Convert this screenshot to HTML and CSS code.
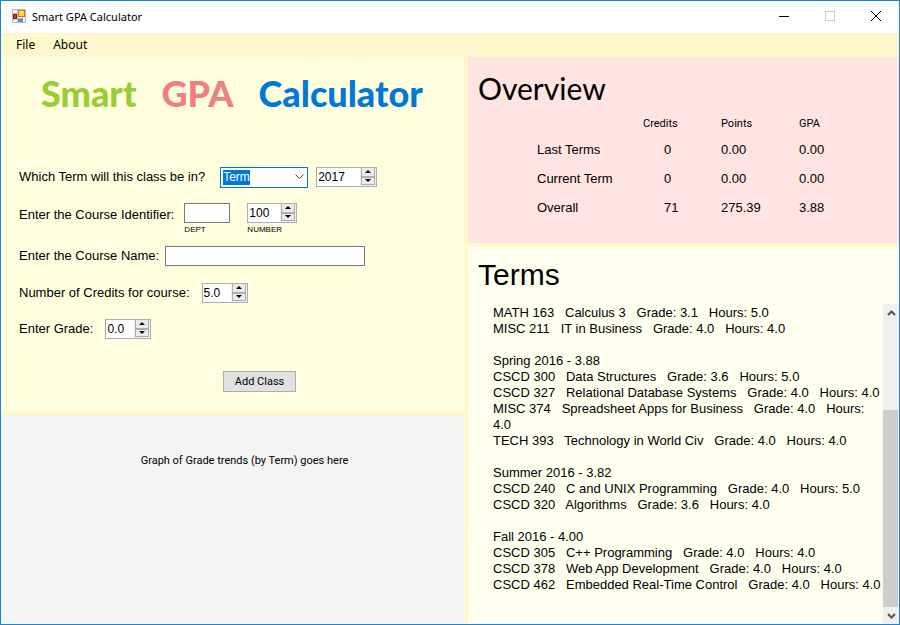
FILE: index.html
```
<!DOCTYPE html>
<html lang="en">
<head>
<meta charset="utf-8">
<title>Smart GPA Calculator</title>
<link rel="stylesheet" href="styles.css">
</head>
<body>
<div class="window">
  <header class="titlebar">
    <svg class="app-icon" width="14" height="14" viewBox="0 0 14 14" aria-hidden="true">
      <rect x="0.5" y="0.5" width="13" height="13" fill="#f4f4f4" stroke="#b9b9b9"/>
      <path d="M5.500 1V13M1 4.500H6M1 10.500H6M10.500 8V13" stroke="#c4c4c4" fill="none"/>
      <rect x="1.500" y="5.500" width="3" height="4" fill="#c93a35" stroke="#911915"/>
      <rect x="6.500" y="1.500" width="6" height="6" fill="#ffd34f" stroke="#b98010"/>
      <path d="M7 2.500H11" stroke="#fff0a8"/>
      <rect x="6" y="9" width="5" height="4" fill="#4f8ceb"/>
      <path d="M6 9.500H11" stroke="#8bb6f7"/>
    </svg>
    <span class="window-title">Smart GPA Calculator</span>
    <div class="window-buttons">
      <button type="button" aria-label="Minimize"><svg width="10" height="10" viewBox="0 0 10 10"><path d="M0 5.500H10" stroke="#000"/></svg></button>
      <button type="button" aria-label="Maximize" disabled><svg width="10" height="10" viewBox="0 0 10 10"><rect x="0.500" y="0.500" width="9" height="9" fill="none" stroke="#ccc"/></svg></button>
      <button type="button" aria-label="Close"><svg width="10" height="10" viewBox="0 0 10 10"><path d="M0 0L10 10M10 0L0 10" stroke="#000"/></svg></button>
    </div>
  </header>
  <nav class="menu">
    <button type="button">File</button>
    <button type="button">About</button>
  </nav>
  <main class="panes">
    <div class="column column-left">
      <form class="entry">
        <h1 class="brand"><span class="brand-smart">Smart</span> <span class="brand-gpa">GPA</span> <span class="brand-calc">Calculator</span></h1>
        <div class="row row-wide">
          <label for="term">Which Term will this class be in?</label>
          <div class="pair">
            <span class="combo">
              <select id="term"><option>Term</option></select>
              <svg width="9" height="6" viewBox="0 0 9 6" aria-hidden="true"><path d="M0.500 0.500L4.500 4.500L8.500 0.500" fill="none" stroke="#444"/></svg>
            </span>
            <span class="spinner spinner-year">
              <input type="number" value="2017" aria-label="Year">
              <span class="steps"><button type="button" class="up" aria-label="Increase year"></button><button type="button" class="down" aria-label="Decrease year"></button></span>
            </span>
          </div>
        </div>
        <div class="row row-captioned">
          <span>Enter the Course Identifier:</span>
          <div class="field field-dept"><input class="text" id="dept" type="text"><label for="dept">DEPT</label></div>
          <div class="field">
            <span class="spinner spinner-number">
              <input type="number" id="number" value="100">
              <span class="steps"><button type="button" class="up" aria-label="Increase number"></button><button type="button" class="down" aria-label="Decrease number"></button></span>
            </span>
            <label for="number">NUMBER</label>
          </div>
        </div>
        <div class="row row-tight">
          <label for="name">Enter the Course Name:</label>
          <input class="text text-name" id="name" type="text">
        </div>
        <div class="row">
          <label for="credits">Number of Credits for course:</label>
          <span class="spinner">
            <input type="text" inputmode="decimal" id="credits" value="5.0">
            <span class="steps"><button type="button" class="up" aria-label="Increase credits"></button><button type="button" class="down" aria-label="Decrease credits"></button></span>
          </span>
        </div>
        <div class="row">
          <label for="grade">Enter Grade:</label>
          <span class="spinner">
            <input type="text" inputmode="decimal" id="grade" value="0.0">
            <span class="steps"><button type="button" class="up" aria-label="Increase grade"></button><button type="button" class="down" aria-label="Decrease grade"></button></span>
          </span>
        </div>
        <button class="add" type="button">Add Class</button>
      </form>
      <section class="graph"><p>Graph of Grade trends (by Term) goes here</p></section>
    </div>
    <div class="column column-right">
      <section class="overview">
        <h2>Overview</h2>
        <table>
          <thead><tr><td></td><th scope="col">Credits</th><th scope="col">Points</th><th scope="col">GPA</th></tr></thead>
          <tbody>
            <tr><th scope="row">Last Terms</th><td class="credits">0</td><td>0.00</td><td>0.00</td></tr>
            <tr><th scope="row">Current Term</th><td class="credits">0</td><td>0.00</td><td>0.00</td></tr>
            <tr><th scope="row">Overall</th><td class="credits">71</td><td>275.39</td><td>3.88</td></tr>
          </tbody>
        </table>
      </section>
      <section class="terms">
        <h2>Terms</h2>
        <div class="log">
          <div class="log-text">MATH 163   Calculus 3   Grade: 3.1   Hours: 5.0
MISC 211   IT in Business   Grade: 4.0   Hours: 4.0

Spring 2016 - 3.88
CSCD 300   Data Structures   Grade: 3.6   Hours: 5.0
CSCD 327   Relational Database Systems   Grade: 4.0   Hours: 4.0
MISC 374   Spreadsheet Apps for Business   Grade: 4.0   Hours: 4.0
TECH 393   Technology in World Civ   Grade: 4.0   Hours: 4.0

Summer 2016 - 3.82
CSCD 240   C and UNIX Programming   Grade: 4.0   Hours: 5.0
CSCD 320   Algorithms   Grade: 3.6   Hours: 4.0

Fall 2016 - 4.00
CSCD 305   C++ Programming   Grade: 4.0   Hours: 4.0
CSCD 378   Web App Development   Grade: 4.0   Hours: 4.0
CSCD 462   Embedded Real-Time Control   Grade: 4.0   Hours: 4.0</div>
          <div class="scrollbar">
            <button type="button" aria-label="Scroll up"><svg width="9" height="6" viewBox="0 0 9 6"><path d="M1 5L4.500 1.500L8 5" fill="none" stroke="#555" stroke-width="2"/></svg></button>
            <div class="track"></div>
            <div class="thumb"></div>
            <button type="button" aria-label="Scroll down"><svg width="9" height="6" viewBox="0 0 9 6"><path d="M1 1L4.500 4.500L8 1" fill="none" stroke="#555" stroke-width="2"/></svg></button>
          </div>
        </div>
      </section>
    </div>
  </main>
</div>
</body>
</html>
```
FILE: styles.css
```
* { box-sizing: border-box; }

body {
  margin: 0;
  color: #000;
  font: 13px/16px "Liberation Sans", Arial, sans-serif;
}

button, input, select { font: inherit; color: inherit; margin: 0; }
h1, h2, p { margin: 0; font-weight: normal; }

.window {
  display: flex;
  flex-direction: column;
  min-height: 100vh;
  border: 1px solid #1883d7;
  background: #fff8cc;
}

/* Title bar and menu */
.titlebar {
  display: flex;
  align-items: center;
  height: 32px;
  padding-left: 11px;
  background: #fff;
}
.app-icon { margin-bottom: 2px; }
.window-title, .menu { font: 12px/16px "Segoe UI", "Noto Sans", sans-serif; }
.window-title { margin-left: 6px; font-size: 11px; }
.window-buttons { display: flex; margin-left: auto; }
.window-buttons button {
  display: grid;
  place-items: center;
  width: 46px;
  height: 32px;
  padding: 0 1px 2px 0;
  border: 0;
  background: none;
}
.menu { display: flex; height: 24px; padding-left: 10px; gap: 8px; }
.menu button { padding: 0 5px; border: 0; background: none; }

/* Split panes */
.panes { display: grid; flex: 1; grid-template-columns: 463fr 431fr; gap: 4px; }
.column { display: grid; gap: 4px; min-width: 0; }
.column-left { grid-template-rows: 355px 1fr; }
.column-right { grid-template-rows: 186px 1fr; }

.entry { display: flex; flex-direction: column; padding: 12px 18px 0; background: #ffffe0; }
.brand {
  display: flex;
  gap: 25px;
  margin: 0 0 50px 22px;
  font: 900 36px/48px "Comic Sans MS", Lato, sans-serif;
}
.brand-smart { color: #9acd32; }
.brand-gpa { color: #f08080; }
.brand-calc { color: #0078d7; }

.row { display: flex; align-items: center; gap: 12px; height: 20px; margin-bottom: 16px; }
.row-wide { gap: 15px; }
.row-captioned { align-items: flex-start; gap: 10px; height: 34px; margin-bottom: 9px; }
.row-captioned > span { line-height: 24px; }
.row-tight { gap: 6px; margin-bottom: 17px; }
.pair { display: flex; align-items: center; gap: 8px; }
.field { display: flex; flex-direction: column; align-items: flex-start; }
.field label { font-size: 8px; line-height: 14px; }
.field-dept { margin-right: 7px; }

.text { width: 46px; height: 20px; padding: 0 3px; border: 1px solid #7a7a7a; background: #fff; }
.text-name { width: 200px; }

.combo { display: flex; align-items: center; }
.combo select {
  width: 88px;
  height: 21px;
  padding: 0 2px;
  appearance: none;
  border: 1px solid #0078d7;
  border-radius: 0;
  background: linear-gradient(#0078d7, #0078d7) 2px 2px / 27px 15px no-repeat #fff;
  color: #fff;
  font-size: 12px;
}
.combo svg { margin-left: -13px; margin-right: 4px; pointer-events: none; }

.spinner {
  display: flex;
  width: 46px;
  height: 20px;
  border: 1px solid #abadb3;
  background: #fff;
}
.spinner-year { width: 61px; }
.spinner-number { width: 50px; }
.spinner input {
  flex: 1;
  min-width: 0;
  padding: 0 0 1px 1px;
  border: 0;
  background: none;
  font-size: 12px;
  appearance: textfield;
}
.spinner input::-webkit-inner-spin-button { display: none; }
.steps { display: grid; grid-template-rows: 1fr 1fr; width: 16px; padding: 0 1px 1px; background: #f0f0f0; }
.steps button {
  display: grid;
  place-items: center;
  min-height: 0;
  padding: 0;
  border: 1px solid #acacac;
  background: #ebebeb;
}
.steps button::before { content: ""; border: 3px solid transparent; }
.steps .up { border-top: 0; }
.steps .up::before { border-top: 0; border-bottom-color: #000; }
.steps .down::before { border-bottom: 0; border-top-color: #000; }

.add {
  width: 73px;
  height: 21px;
  margin: 16px 0 0 204px;
  padding: 0;
  border: 1px solid #adadad;
  background: #e1e1e1;
}
.add, .graph, .overview thead { font-family: Roboto, sans-serif; font-size: 11px; }

.graph { padding: 37px 0 0 24px; background: #f4f4f4; text-align: center; }

/* Overview */
.overview { padding: 12px 10px 0; background: #ffe4e1; }
.overview h2 { margin-bottom: 2px; font: 30px/38px "Comic Sans MS", Lato, sans-serif; }
.overview table { margin-left: 59px; border-collapse: collapse; table-layout: fixed; width: 310px; }
.overview th, .overview td { height: 29px; padding: 0; text-align: left; font-weight: normal; }
.overview thead th, .overview thead td { height: 26px; padding-top: 4px; }
.overview thead th { width: 78px; }
.overview thead td { width: 106px; }
.overview .credits { padding-left: 21px; }

/* Terms */
.terms { display: flex; flex-direction: column; background: #fffff0; }
.terms h2 { padding: 10px 10px 11px; font-size: 30px; line-height: 36px; }
.log { display: flex; flex: 1; }
.log-text { flex: 1; padding: 1px 0 0 25px; white-space: pre-wrap; }
.scrollbar { display: flex; flex-direction: column; width: 16px; background: #f0f0f0; }
.scrollbar button { display: grid; place-items: center; height: 17px; padding: 0; border: 0; background: none; }
.track { flex: 89; }
.thumb { flex: 197; margin-right: 1px; background: #cdcdcd; }
```
